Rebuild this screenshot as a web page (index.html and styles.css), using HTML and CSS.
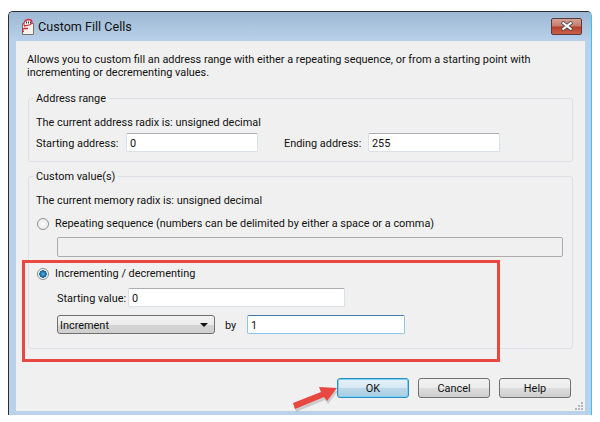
FILE: index.html
```html
<!DOCTYPE html>
<html lang="en">
<head>
<meta charset="UTF-8">
<title>Custom Fill Cells</title>
<link rel="stylesheet" href="styles.css">
</head>
<body>
    <div class="window">
        <div class="titlebar">
            <svg class="app-icon" width="16" height="18" viewBox="0 0 16 18">
                <path d="M2.5 5.5H13.5V16.5H2.5Z" fill="#f6f3ea" stroke="#77736a"/>
                <path d="M4.5 8C3 6 4 2 8 1.5C12.5 1.5 13 5 10.5 6.5C8.5 7.6 6 7 4.5 8Z" fill="#fff" stroke="#cf2a3c" stroke-width="1.3"/>
                <path d="M6.5 3.5V5.5M8.5 3.5V5.5M10.5 3.5V5.5" stroke="#333" stroke-width="1"/>
                <path d="M4 10.5H8M4 10.5C2 11 2 13.5 4 13.5" fill="none" stroke="#cf2a3c" stroke-width="1.4"/>
            </svg>
            <span class="title">Custom Fill Cells</span>
            <div class="close">
                <svg width="14" height="10" viewBox="0 0 14 10">
                    <path d="M2 1L12 9M12 1L2 9" stroke="#47494d" stroke-width="3.6"/>
                    <path d="M2.5 1.5L11.5 8.5M11.5 1.5L2.5 8.5" stroke="#fff" stroke-width="2.2"/>
                </svg>
            </div>
        </div>

        <div class="client">
            <p class="desc">Allows you to custom fill an address range with either a repeating sequence, or from a starting point with<br>incrementing or decrementing values.</p>

            <fieldset class="group group-address">
                <legend>Address range</legend>
                <div class="radix">The current address radix is: unsigned decimal</div>
                <div class="row">
                    <label class="lbl-start">Starting address:</label>
                    <input class="field w-addr" type="text" value="0">
                    <label class="lbl-end">Ending address:</label>
                    <input class="field w-addr" type="text" value="255">
                </div>
            </fieldset>

            <fieldset class="group group-values">
                <legend>Custom value(s)</legend>
                <div class="radix">The current memory radix is: unsigned decimal</div>
                <div class="radio-row first">
                    <span class="radio"></span>
                    <span>Repeating sequence (numbers can be delimited by either a space or a comma)</span>
                </div>
                <input class="field disabled" type="text" disabled>
                <div class="radio-row second">
                    <span class="radio checked"></span>
                    <span>Incrementing / decrementing</span>
                </div>
                <div class="row sub start-value">
                    <label class="lbl-value">Starting value:</label>
                    <input class="field w-value" type="text" value="0">
                </div>
                <div class="row sub step">
                    <div class="select">Increment<span class="caret"></span></div>
                    <label class="lbl-by">by</label>
                    <input class="field focused w-step" type="text" value="1">
                </div>
            </fieldset>

            <div class="buttons">
                <button class="btn default">OK</button>
                <button class="btn">Cancel</button>
                <button class="btn">Help</button>
            </div>
            <svg class="grip" width="10" height="10" viewBox="0 0 10 10">
                <path d="M7 1h2v2H7zM4 4h2v2H4zM7 4h2v2H7zM1 7h2v2H1zM4 7h2v2H4zM7 7h2v2H7z" fill="#b4b8bd"/>
            </svg>
        </div>
    </div>

    <!-- annotations on top of the screenshot -->
    <div class="mark"></div>
    <svg class="arrow" width="60" height="34" viewBox="0 0 60 34">
        <path d="M3 24L32 13L29 8L47 9L37 22L34 18L5 30Z" fill="#000" opacity=".15"/>
        <path d="M2 21L30 10L28 5L46 6L36 19L33 15L4 27Z" fill="#e8483f"/>
    </svg>
</body>
</html>
```

FILE: styles.css
```css
body {
    margin: 0;
    background-color: #fff;
    font-family: Roboto, "Noto Sans", sans-serif;
    font-size: 10.9px;
    color: #111;
}

label {
    white-space: nowrap;
    padding-top: 1px;
}

.window {
    width: 582px;
    height: 403px;
    margin: 11px 0 0 8px;
    border: 1px solid #2b2f33;
    border-right-color: #35c4ee;
    border-bottom: none;
    border-radius: 5px 5px 0 0;
    background: #b9d1ea;
    display: flex;
    flex-direction: column;
}

.titlebar {
    height: 29px;
    flex: none;
    display: flex;
    align-items: center;
    padding: 0 9px 0 11px;
    background: linear-gradient(#9db8d4, #b9d1ea);
    border-radius: 4px 4px 0 0;
}

.app-icon {
    margin-right: 2px;
}

.title {
    flex: 1;
    font-size: 12.6px;
}

.close {
    width: 29px;
    height: 15px;
    margin-top: -1px;
    border: 1px solid #5a3a38;
    border-radius: 2px;
    background: linear-gradient(#d4a196 0, #c77d6d 45%, #b8402a 55%, #c9604a 100%);
    display: flex;
    align-items: center;
    justify-content: center;
}

.client {
    flex: 1;
    margin: 0 6px 4px 7px;
    padding: 12px 12px 0 12px;
    background-color: #f0f0f0;
    position: relative;
}

.desc {
    margin: 0 0 11px -1px;
    line-height: 13px;
}

.group {
    margin: 0;
    padding: 0 7px;
    border: 1px solid #dcdfe3;
    border-radius: 3px;
    min-width: 0;
}

.group legend {
    padding: 2px 3px 0;
    margin-left: -3px;
    line-height: 14px;
}

.group-address {
    height: 72px;
    margin-bottom: 6px;
    box-sizing: border-box;
}

.group-values {
    height: 181px;
    box-sizing: border-box;
}

.radix {
    line-height: 14px;
    margin-top: 10px;
}

.row {
    display: flex;
    align-items: center;
}

.group-address .row {
    margin-top: 3px;
}

.field {
    height: 19px;
    box-sizing: border-box;
    padding: 1px 3px 0;
    border: 1px solid #dbdfe6;
    border-top-color: #abadb3;
    border-radius: 2px;
    background: #fff;
    font: inherit;
    color: inherit;
    outline: none;
}

.w-addr {
    width: 132px;
}

.lbl-start {
    width: 90px;
}

.lbl-end {
    width: 84px;
    margin-left: 26px;
}

.radio-row {
    display: flex;
    align-items: center;
    line-height: 14px;
    gap: 6px;
    margin-left: 1px;
}

.radio-row.first {
    margin-top: 9px;
}

.radio-row.second {
    margin-top: 10px;
}

.radio {
    width: 10px;
    height: 10px;
    border: 1px solid #8e8f8f;
    border-radius: 50%;
    background: radial-gradient(#fff, #dcdcdc);
    box-shadow: inset 0 0 0 1px #f4f4f4;
}

.radio.checked {
    background: radial-gradient(#4cb4e4 0, #0d5f96 3.5px, #f4f4f4 4px);
}

.disabled {
    display: block;
    width: 506px;
    height: 20px;
    margin: 6px 0 0 21px;
    border: 1px solid #ababab;
    background: #f0f0f0;
}

.sub {
    margin-left: 21px;
}

.start-value {
    margin-top: 7px;
}

.lbl-value {
    width: 71px;
}

.w-value {
    width: 217px;
}

.step {
    margin-top: 8px;
}

.select {
    width: 158px;
    height: 19px;
    box-sizing: border-box;
    padding: 1px 0 0 2px;
    border: 1px solid #707070;
    border-radius: 3px;
    background: linear-gradient(#f2f2f2 0, #ebebeb 50%, #d4d4d4 51%, #cfcfcf 100%);
    line-height: 17px;
    position: relative;
}

.caret {
    position: absolute;
    right: 6px;
    top: 7px;
    border: 4px solid transparent;
    border-top: 4px solid #111;
    border-bottom: none;
}

.lbl-by {
    width: 22px;
    margin-left: 10px;
}

.focused {
    width: 158px;
    border: 1px solid #8fc3e6;
    border-top-color: #3d7bad;
}

.buttons {
    display: flex;
    justify-content: flex-end;
    gap: 9px;
    margin: 29px 2px 0 0;
}

.btn {
    width: 72px;
    height: 20px;
    padding: 1px 0 0;
    border: 1px solid #707070;
    border-radius: 3px;
    background: linear-gradient(#f2f2f2 0, #ebebeb 50%, #dddddd 51%, #cfcfcf 100%);
    font: inherit;
    color: inherit;
}

.btn.default {
    border-color: #2a8fc4;
    box-shadow: inset 0 0 0 1px #7ed0ef;
    background: linear-gradient(#e6f2f9 0, #d6e8f3 50%, #bcd8e9 51%, #a9cde3 100%);
}

.grip {
    position: absolute;
    right: 1px;
    bottom: 0;
}

.mark {
    position: absolute;
    left: 22px;
    top: 260px;
    width: 472px;
    height: 96px;
    border: 3px solid #e8483f;
}

.arrow {
    position: absolute;
    left: 291px;
    top: 382px;
}
```
